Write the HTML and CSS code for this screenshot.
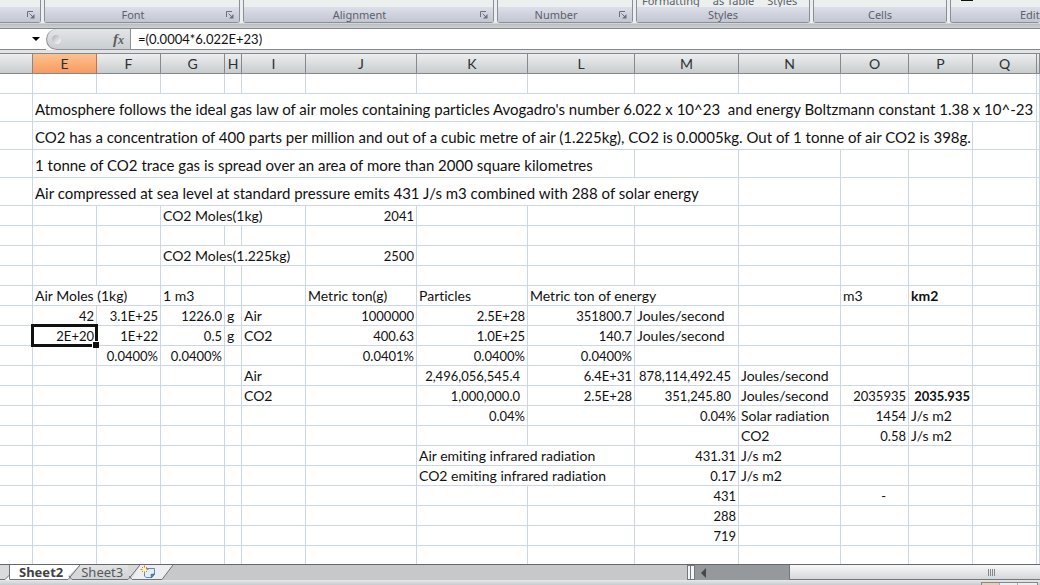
FILE: index.html
```
<!DOCTYPE html>
<html lang="en">
<head>
  <meta charset="UTF-8">
  <meta name="viewport" content="width=device-width, initial-scale=1.0">
  <title>Sheet2</title>
  <link rel="stylesheet" href="styles.css">
</head>
<body>
  <svg class="defs" width="0" height="0" aria-hidden="true">
    <symbol id="launcher" viewBox="0 0 8 8">
      <path d="M0.5 6V0.5H6" fill="none" stroke="#6b7078"/>
      <path d="M2.5 2.5L6 6" stroke="#6b7078"/>
      <path d="M7.5 3V7.5H3Z" fill="#6b7078"/>
    </symbol>
  </svg>

  <div class="ribbon">
    <section class="group group-clipboard">
      <div class="group-body"></div>
      <div class="group-foot"><span></span><button class="launcher" aria-label="Clipboard options"><svg><use href="#launcher"/></svg></button></div>
    </section>
    <section class="group group-font">
      <div class="group-body"></div>
      <div class="group-foot"><span>Font</span><button class="launcher" aria-label="Font options"><svg><use href="#launcher"/></svg></button></div>
    </section>
    <section class="group group-alignment">
      <div class="group-body"></div>
      <div class="group-foot"><span>Alignment</span><button class="launcher" aria-label="Alignment options"><svg><use href="#launcher"/></svg></button></div>
    </section>
    <section class="group group-number">
      <div class="group-body"></div>
      <div class="group-foot"><span>Number</span><button class="launcher" aria-label="Number options"><svg><use href="#launcher"/></svg></button></div>
    </section>
    <section class="group group-styles">
      <div class="group-body"><button>Formatting</button><button>as Table</button><button>Styles</button></div>
      <div class="group-foot plain"><span>Styles</span></div>
    </section>
    <section class="group group-cells">
      <div class="group-body"></div>
      <div class="group-foot plain"><span>Cells</span></div>
    </section>
    <section class="group group-editing">
      <div class="group-body"><i class="eraser"></i></div>
      <div class="group-foot plain"><span>Editing</span></div>
    </section>
  </div>

  <div class="formula-bar">
    <button class="name-drop" aria-label="Name box"></button>
    <div class="fx-area">
      <span class="knob"></span>
      <button class="fx" aria-label="Insert function">f<small>x</small></button>
    </div>
    <input class="formula" type="text" aria-label="Formula" value="=(0.0004*6.022E+23)">
  </div>

  <main class="sheet">
    <table>
      <colgroup>
        <col class="w-edge"><col class="w64"><col class="w64"><col class="w64"><col class="w17"><col class="w64">
        <col class="w111"><col class="w111"><col class="w107"><col class="w104"><col class="w102"><col class="w68">
        <col class="w64"><col class="w64"><col>
      </colgroup>
      <thead>
        <tr><th></th><th class="active">E</th><th>F</th><th>G</th><th>H</th><th>I</th><th>J</th><th>K</th><th>L</th><th>M</th><th>N</th><th>O</th><th>P</th><th>Q</th><th></th></tr>
      </thead>
      <tbody>
        <tr><td></td><td></td><td></td><td></td><td></td><td></td><td></td><td></td><td></td><td></td><td></td><td></td><td></td><td></td><td></td></tr>
        <tr class="note"><td></td><td colspan="13">Atmosphere follows the ideal gas law of air moles containing particles Avogadro's number 6.022 x 10^23&nbsp; and energy Boltzmann constant 1.38 x 10^-23</td><td></td></tr>
        <tr class="note"><td></td><td colspan="12">CO2 has a concentration of 400 parts per million and out of a cubic metre of air (1.225kg), CO2 is 0.0005kg. Out of 1 tonne of air CO2 is 398g.</td><td></td><td></td></tr>
        <tr class="note"><td></td><td colspan="8">1 tonne of CO2 trace gas is spread over an area of more than 2000 square kilometres</td><td></td><td></td><td></td><td></td><td></td><td></td></tr>
        <tr class="note"><td></td><td colspan="9">Air compressed at sea level at standard pressure emits 431 J/s m3 combined with 288 of solar energy</td><td></td><td></td><td></td><td></td><td></td></tr>
        <tr><td></td><td></td><td></td><td colspan="3">CO2 Moles(1kg)</td><td class="n">2041</td><td></td><td></td><td></td><td></td><td></td><td></td><td></td><td></td></tr>
        <tr><td></td><td></td><td></td><td></td><td></td><td></td><td></td><td></td><td></td><td></td><td></td><td></td><td></td><td></td><td></td></tr>
        <tr><td></td><td></td><td></td><td colspan="3">CO2 Moles(1.225kg)</td><td class="n">2500</td><td></td><td></td><td></td><td></td><td></td><td></td><td></td><td></td></tr>
        <tr><td></td><td></td><td></td><td></td><td></td><td></td><td></td><td></td><td></td><td></td><td></td><td></td><td></td><td></td><td></td></tr>
        <tr><td></td><td colspan="2">Air Moles (1kg)</td><td>1 m3</td><td></td><td></td><td>Metric ton(g)</td><td>Particles</td><td colspan="2">Metric ton of energy</td><td></td><td>m3</td><td class="b">km2</td><td></td><td></td></tr>
        <tr><td></td><td class="n">42</td><td class="n">3.1E+25</td><td class="n">1226.0</td><td>g</td><td>Air</td><td class="n">1000000</td><td class="n">2.5E+28</td><td class="n">351800.7</td><td>Joules/second</td><td></td><td></td><td></td><td></td><td></td></tr>
        <tr><td></td><td class="n selected">2E+20</td><td class="n">1E+22</td><td class="n">0.5</td><td>g</td><td>CO2</td><td class="n">400.63</td><td class="n">1.0E+25</td><td class="n">140.7</td><td>Joules/second</td><td></td><td></td><td></td><td></td><td></td></tr>
        <tr><td></td><td></td><td class="n">0.0400%</td><td class="n">0.0400%</td><td></td><td></td><td class="n">0.0401%</td><td class="n">0.0400%</td><td class="n">0.0400%</td><td></td><td></td><td></td><td></td><td></td><td></td></tr>
        <tr><td></td><td></td><td></td><td></td><td></td><td>Air</td><td></td><td class="n acc">2,496,056,545.4</td><td class="n">6.4E+31</td><td class="n acc">878,114,492.45</td><td>Joules/second</td><td></td><td></td><td></td><td></td></tr>
        <tr><td></td><td></td><td></td><td></td><td></td><td>CO2</td><td></td><td class="n acc">1,000,000.0</td><td class="n">2.5E+28</td><td class="n acc">351,245.80</td><td>Joules/second</td><td class="n">2035935</td><td class="n b">2035.935</td><td></td><td></td></tr>
        <tr><td></td><td></td><td></td><td></td><td></td><td></td><td></td><td class="n">0.04%</td><td></td><td class="n">0.04%</td><td>Solar radiation</td><td class="n">1454</td><td>J/s m2</td><td></td><td></td></tr>
        <tr><td></td><td></td><td></td><td></td><td></td><td></td><td></td><td></td><td></td><td></td><td>CO2</td><td class="n">0.58</td><td>J/s m2</td><td></td><td></td></tr>
        <tr><td></td><td></td><td></td><td></td><td></td><td></td><td></td><td colspan="2">Air emiting infrared radiation</td><td class="n">431.31</td><td>J/s m2</td><td></td><td></td><td></td><td></td></tr>
        <tr><td></td><td></td><td></td><td></td><td></td><td></td><td></td><td colspan="2">CO2 emiting infrared radiation</td><td class="n">0.17</td><td>J/s m2</td><td></td><td></td><td></td><td></td></tr>
        <tr><td></td><td></td><td></td><td></td><td></td><td></td><td></td><td></td><td></td><td class="n">431</td><td></td><td class="n dash">-</td><td></td><td></td><td></td></tr>
        <tr><td></td><td></td><td></td><td></td><td></td><td></td><td></td><td></td><td></td><td class="n">288</td><td></td><td></td><td></td><td></td><td></td></tr>
        <tr><td></td><td></td><td></td><td></td><td></td><td></td><td></td><td></td><td></td><td class="n">719</td><td></td><td></td><td></td><td></td><td></td></tr>
        <tr><td></td><td></td><td></td><td></td><td></td><td></td><td></td><td></td><td></td><td></td><td></td><td></td><td></td><td></td><td></td></tr>
      </tbody>
    </table>
  </main>

  <div class="bottom">
    <nav class="tabs">
      <svg width="10" height="15"><path d="M0 0H10V15H0Z" fill="#fff"/><path d="M0 0H9.5V10L5 14.5H0Z" fill="#d9dbdd"/><path d="M9.5 0V14.5M9.5 10L5 14.5H0" fill="none" stroke="#6f7276"/></svg>
      <button class="tab current">Sheet2</button>
      <svg width="12" height="15"><path d="M0 0H12L0 15Z" fill="#fff"/><path d="M12 0V15H3L0 11Z" fill="#d6d8da"/><path d="M12 0L3 11L0 14.5M1 11L4 14.5H12" fill="none" stroke="#6f7276"/></svg>
      <button class="tab other">Sheet3</button>
      <svg width="12" height="15"><path d="M0 0H12V15H0Z" fill="#d6d8da"/><path d="M12 0V15H3Z" fill="#eceef0"/><path d="M12 0L3 11L0 14.5M1 11L4 14.5H12" fill="none" stroke="#6f7276"/></svg>
      <button class="tab new" aria-label="Insert worksheet">
        <svg width="16" height="14" viewBox="0 0 16 14">
          <path d="M4.5 3.5H14.5V9L12 12.5H6L4.5 11Z" fill="#e3edfb" stroke="#6585b8"/>
          <path d="M14.5 9L11 9.5L11.5 12.5Z" fill="#5f83bd" stroke="#4a6ca5"/>
          <path d="M4.5 0.5V8.5M0.5 4.5H8.5M2 2L7 7M7 2L2 7" stroke="#c98a1c"/>
          <circle cx="4.5" cy="4.5" r="2" fill="#fff1b5"/>
        </svg>
      </button>
      <svg width="13" height="15"><path d="M0 0H13L2 14.5H0Z" fill="#eceef0"/><path d="M13 0L2 14.5H0" fill="none" stroke="#6f7276"/></svg>
    </nav>
    <div class="scroll">
      <span class="splitter"></span>
      <button class="arrow" aria-label="Scroll left"></button>
      <span class="thumb"><i></i><i></i><i></i><i></i></span>
    </div>
  </div>
  <footer class="status"><span class="views"><i class="lit"></i><i></i></span></footer>
</body>
</html>
```

FILE: styles.css
```
* {
  box-sizing: border-box;
}

body {
  margin: 0;
  height: 100vh;
  display: flex;
  flex-direction: column;
  overflow: hidden;
  background: #fff;
  color: #111;
  font-family: Lato, "Open Sans", sans-serif;
  font-size: 13px;
  font-variant-ligatures: none;
}

button {
  border: 0;
  padding: 0;
  background: none;
  font: inherit;
  color: inherit;
}

.defs {
  position: absolute;
}

/* ribbon */
.ribbon {
  flex: none;
  display: flex;
  gap: 3px;
  height: 29px;
  padding-bottom: 5px;
  background: linear-gradient(#eceff0 23px, #b9bcc0 24px, #d0d3d6);
  border-bottom: 1px solid #85888c;
  font-family: "Noto Sans", sans-serif;
  font-size: 11px;
  color: #5d6068;
}

.group {
  flex: none;
  display: flex;
  flex-direction: column;
  border: 1px solid #8b8e95;
  border-top: 0;
  border-radius: 0 0 3px 3px;
}

.group-clipboard { width: 41px; border-left: 0; border-radius: 0 0 3px 0; }
.group-font { width: 196px; }
.group-alignment { width: 251px; }
.group-number { width: 136px; }
.group-styles { width: 174px; }
.group-cells { width: 134px; }
.group-editing { flex: 1; border-right: 0; overflow: hidden; }

.group-body {
  height: 7px;
  display: flex;
  align-items: flex-end;
  padding-left: 5px;
  gap: 13px;
  background: #ebefee;
}

.group-body button {
  line-height: 12px;
}

.group-foot {
  flex: 1;
  display: flex;
  align-items: center;
  gap: 5px;
  padding-right: 5px;
  background: linear-gradient(#dcdfe9, #c3c6d2);
}

.plain {
  padding-right: 0;
}

.group-foot span {
  flex: 1;
  text-align: center;
}

.launcher,
.launcher svg {
  display: block;
  width: 8px;
  height: 8px;
}

.eraser {
  width: 12px;
  height: 1px;
  margin-left: 5px;
  align-self: flex-start;
  background: #111;
}

.group-editing .group-foot span {
  flex: none;
  width: 174px;
}

/* formula bar */
.formula-bar {
  flex: none;
  display: flex;
  height: 24px;
  background: #fff;
  border-bottom: 3px solid #e1e4e6;
}

.name-drop {
  width: 46px;
  display: flex;
  align-items: center;
  justify-content: flex-end;
  padding-right: 6px;
  border-bottom: 1px solid #85888c;
}

.name-drop::after {
  content: "";
  border: 4px solid transparent;
  border-top-color: #000;
  border-bottom: 0;
}

.fx-area {
  width: 85px;
  display: flex;
  align-items: center;
  justify-content: space-between;
  padding: 0 6px 0 5px;
  background: linear-gradient(#e3e5e7, #cbced1);
  border: 1px solid #8e9195;
  border-top: 0;
  border-radius: 11px 0 0 11px;
}

.knob {
  width: 9px;
  height: 9px;
  border-radius: 50%;
  background: linear-gradient(135deg, #aaadb0, #fff);
}

.fx {
  font: italic bold 15px/18px "Liberation Serif", serif;
  color: #5b5e62;
}

.fx small {
  font-size: 12px;
}

.formula {
  flex: 1;
  border: 0;
  border-bottom: 1px solid #85888c;
  padding: 0 7px;
  font: inherit;
  color: #111;
}

/* grid */
.sheet {
  flex: 1;
  min-height: 0;
  overflow: hidden;
}

table {
  width: 100%;
  table-layout: fixed;
  border-collapse: separate;
  border-spacing: 0;
}

.w-edge { width: 33px; }
.w17 { width: 17px; }
.w64 { width: 64px; }
.w68 { width: 68px; }
.w102 { width: 102px; }
.w104 { width: 104px; }
.w107 { width: 107px; }
.w111 { width: 111px; }

th {
  height: 21px;
  padding: 0;
  background: linear-gradient(#eceeef, #c9cccd);
  border: solid #85898d;
  border-width: 1px 1px 1px 0;
  font-size: 14px;
  line-height: 19px;
  font-weight: normal;
  color: #2d3033;
}

th.active {
  background: linear-gradient(#fbc291, #fa9a5f);
  border-right-color: #c5733c;
}

td {
  height: 20px;
  padding: 1px 2px 0;
  border: solid #cdd6e4;
  border-width: 0 1px 1px 0;
  font-size: 14px;
  line-height: 18px;
  white-space: nowrap;
}

.note td {
  height: 28px;
  padding-top: 3px;
  font-size: 15px;
}

td.n {
  font-size: 13px;
  text-align: right;
}

.b {
  font-weight: bold;
}

td.acc {
  padding-right: 7px;
}

td.dash {
  padding-right: 22px;
}

.selected {
  position: relative;
}

.selected::before {
  content: "";
  position: absolute;
  inset: -2px;
  border: 3px solid #111;
}

.selected::after {
  content: "";
  position: absolute;
  right: -3px;
  bottom: -3px;
  width: 6px;
  height: 6px;
  background: #111;
  border: solid #fff;
  border-width: 1px 0 0 1px;
}

/* sheet tabs and scrollbar */
.bottom {
  flex: none;
  display: flex;
  height: 16px;
  background: #c6c8ca;
  border-top: 1px solid #65686c;
}

.tabs {
  display: flex;
  flex: 1;
}

.tabs > svg {
  flex: none;
  display: block;
}

.tab {
  height: 15px;
  font: 13px/14px "Noto Sans", sans-serif;
  color: #55585c;
  border-bottom: 1px solid #6f7276;
}

.current {
  padding: 0 5px 0 9px;
  font-weight: bold;
  color: #3f4246;
  background: #fff;
}

.other {
  padding: 0 5px 0 1px;
  background: linear-gradient(#e2e4e6, #cfd1d3);
}

.new {
  padding-right: 4px;
  background: #eceef0;
}

.new svg {
  display: block;
}

.scroll {
  display: flex;
  flex: none;
  width: 353px;
  background: #95999c;
}

.splitter {
  width: 8px;
  border: 1px solid #75787b;
  background: linear-gradient(90deg, #f4f5f6 2px, #75787b 2px, #75787b 3px, #f4f5f6 3px);
}

.arrow {
  width: 94px;
  display: flex;
  align-items: center;
  padding-left: 6px;
}

.arrow::before {
  content: "";
  border: 5px solid transparent;
  border-right-color: #45484b;
  border-left: 0;
}

.thumb {
  flex: 1;
  display: flex;
  align-items: center;
  padding-left: 198px;
  gap: 1px;
  border: solid #75787b;
  border-width: 0 0 1px 1px;
  background: linear-gradient(#f8f8f9, #d5d7d9);
}

.thumb i {
  width: 1px;
  height: 7px;
  background: #85888b;
}

.status {
  flex: none;
  display: flex;
  justify-content: flex-end;
  height: 5px;
  padding: 2px 2px 0 0;
  background: linear-gradient(#e6e8ea, #c8cbce);
}

.views {
  display: flex;
  width: 57px;
  border: 1px solid #85888c;
  border-bottom: 0;
  background: #eceef0;
}

.views i {
  width: 18px;
  border-right: 1px solid #a9acb0;
}

.views .lit {
  background: #e8cfb4;
}
```
